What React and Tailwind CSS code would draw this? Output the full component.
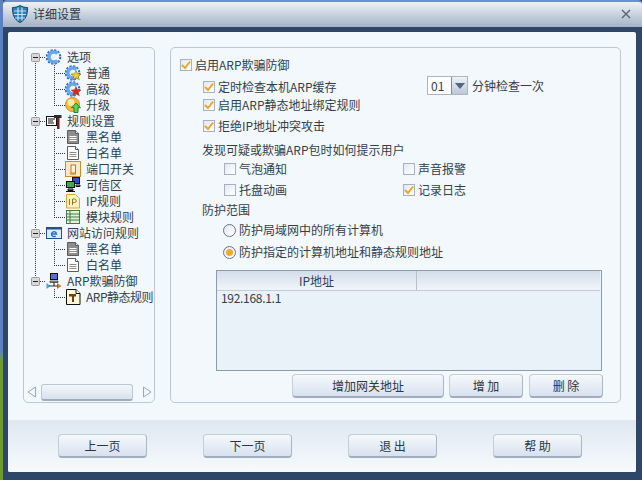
const FONT = "font-['Noto_Sans_CJK_SC','Liberation_Sans',sans-serif]";

// tree icons
const GearIcon = ({ badge }) => (
  <svg width="16" height="16" viewBox="0 0 16 16" className="shrink-0">
    <circle cx="7.500" cy="8" r="6.800" fill="none" stroke="#2c6cc0" strokeWidth="2" strokeDasharray="2.200 1.400" />
    <path d="M11.500 4.500A5 5 0 1 0 11.500 11.500" fill="none" stroke="#6aa6ea" strokeWidth="3.400" />
    <circle cx="7.500" cy="8" r="2" fill="#e8f2fb" />
    {badge && <path d="M11 5.500l1.500 3.300 3.500.3-2.700 2.200 1 3.500-3.300-2-3.200 2 1-3.500-2.700-2.200 3.500-.3z" fill={badge} stroke="#7a5010" strokeWidth=".5" />}
  </svg>
);

const UpgradeIcon = () => (
  <svg width="16" height="16" viewBox="0 0 16 16" className="shrink-0">
    <circle cx="7.500" cy="7.500" r="7" fill="#f4b83e" stroke="#d98a1c" />
    <circle cx="6" cy="5.500" r="3.500" fill="#fde9a8" />
    <path d="M11 6l4.500 4.700H13V15.500H9v-4.800H6.500z" fill="#5fd04f" stroke="#1c7c22" strokeWidth=".9" />
  </svg>
);

const RulesIcon = () => (
  <svg width="16" height="16" viewBox="0 0 16 16" className="shrink-0">
    <rect x="0.500" y="3.500" width="10" height="9" fill="#fff" stroke="#111" />
    <path d="M2 6h7M2 8h5M2 10h6" stroke="#111" />
    <path d="M11 5h2.500v11H11z" fill="#7a1f24" />
    <path d="M8 2h7.500v3H8z" fill="#2b2b2b" />
  </svg>
);

const DocIcon = ({ dark }) => (
  <svg width="16" height="16" viewBox="0 0 16 16" className="shrink-0">
    <path d="M2.500 1.500h8l3 3v10h-11z" fill={dark ? '#8d8d8d' : '#fff'} stroke="#5d5d5d" />
    <path d="M10.500 1.500v3h3" fill={dark ? '#ddd' : '#eee'} stroke="#5d5d5d" />
    <path d="M4.500 7.500h7M4.500 9.500h7M4.500 11.500h7" stroke={dark ? '#fff' : '#8a8a8a'} />
  </svg>
);

const PortIcon = () => (
  <svg width="16" height="16" viewBox="0 0 16 16" className="shrink-0">
    <rect x="0.500" y="0.500" width="15" height="15" fill="#fbe9c6" stroke="#c98a30" />
    <rect x="6" y="4" width="4.500" height="8" fill="#fff3d8" stroke="#c4761a" />
    <path d="M5 13h6" stroke="#c4761a" />
  </svg>
);

const TrustIcon = () => (
  <svg width="16" height="16" viewBox="0 0 16 16" className="shrink-0">
    <rect x="7.500" y="0.500" width="7" height="6" fill="#2c4fbf" stroke="#111" />
    <rect x="1.500" y="4.500" width="8" height="6" fill="#4aa35a" stroke="#111" />
    <path d="M3 12h5v1.500H3zM1 14.500h9M11 8h4v1.500h-4z" stroke="#111" fill="#aaa" />
  </svg>
);

const IpIcon = () => (
  <svg width="16" height="16" viewBox="0 0 16 16" className="shrink-0">
    <path d="M1.500 1.500h9l4 4v9.500h-13z" fill="#fff3c4" stroke="#d7a63a" />
    <path d="M4.500 6v6M7.500 12V6h2a1.500 1.500 0 0 1 0 3.500h-2" fill="none" stroke="#9a7424" />
  </svg>
);

const ModuleIcon = () => (
  <svg width="16" height="16" viewBox="0 0 16 16" className="shrink-0">
    <rect x="1.500" y="1.500" width="13" height="13" fill="#e4f2dc" stroke="#3f7a46" />
    <path d="M1.500 5h13M1.500 8h13M1.500 11h13M5 1.500v13" stroke="#3f7a46" />
  </svg>
);

const SiteIcon = () => (
  <svg width="16" height="16" viewBox="0 0 16 16" className="shrink-0">
    <rect x="0.500" y="2.500" width="15" height="11" fill="#dcecfb" stroke="#274f8f" />
    <path d="M1 3h14v1.500H1z" fill="#274f8f" />
    <path d="M5.500 9h5a2.500 2.500 0 1 0-.8 2" fill="none" stroke="#2b6fc0" strokeWidth="1.300" />
  </svg>
);

const ArpIcon = () => (
  <svg width="16" height="16" viewBox="0 0 16 16" className="shrink-0">
    <rect x="4.500" y="0.500" width="7" height="6" fill="#5a6fd0" stroke="#111" />
    <path d="M4 8h8v1.500H4z" fill="#aaa" stroke="#111" strokeWidth=".6" />
    <path d="M8 9.500V13" stroke="#111" />
    <path d="M0.500 10l4 3-4 3z" fill="#38a8e0" />
    <path d="M11 10l4.500 3-4.500 3z" fill="#d97a1f" />
    <path d="M3 13h9" stroke="#333" />
  </svg>
);

const ArpDocIcon = () => (
  <svg width="16" height="16" viewBox="0 0 16 16" className="shrink-0">
    <path d="M1.500 0.500h9.500l4 4v11h-13.500z" fill="#fff6d6" stroke="#111" />
    <path d="M11 .5v4h4" fill="#fff" stroke="#111" />
    <path d="M4 5h7v2.500H9V13H7V7.500H4z" fill="#6d3f1c" />
  </svg>
);

const Guide = ({ child, last, first, continues = true }) => {
  // dotted tree lines, 1px dots on a 2px pitch
  const dots = { stroke: '#333', strokeWidth: 1, strokeDasharray: '1 1' };
  if (child) {
    return (
      <svg width="35" height="16" className="shrink-0">
        {continues && <path d="M5.500 0v16" {...dots} />}
        <path d={last ? 'M24.500 0v8' : 'M24.500 0v16'} {...dots} />
        <path d="M24 8.500h11" {...dots} />
      </svg>
    );
  }
  return (
    <svg width="16" height="16" className="shrink-0">
      {continues && <path d={first ? 'M5.500 8v8' : 'M5.500 0v16'} {...dots} />}
      {!continues && <path d="M5.500 0v8" {...dots} />}
      <path d="M10 8.500h6" {...dots} />
      <rect x="1.500" y="4.500" width="8" height="8" rx="1" fill="#d8d8d8" stroke="#9a9a9a" />
      <path d="M3 8.500h5" stroke="#222" />
    </svg>
  );
};

const TreeRoot = ({ icon, label, first, continues }) => (
  <div className="flex items-center h-4">
    <Guide first={first} continues={continues} />
    {icon}
    <span className="ml-[5px] whitespace-nowrap">{label}</span>
  </div>
);

const TreeChild = ({ icon, label, last, continues, tight }) => (
  <div className="flex items-center h-4">
    <Guide child last={last} continues={continues} />
    {icon}
    <span className={`ml-[5px] whitespace-nowrap ${tight ? 'tracking-[-0.5px]' : ''}`}>{label}</span>
  </div>
);

const Checkbox = ({ checked }) => (
  <span className="w-3 h-3 shrink-0 border border-[#a3b1c2] bg-gradient-to-br from-[#e3e9f0] to-[#ffffff] flex items-center justify-center">
    {checked && (
      <svg width="10" height="10" viewBox="0 0 10 10">
        <path d="M1 5l3 3 5-6.500" fill="none" stroke="#eda62a" strokeWidth="2" />
      </svg>
    )}
  </span>
);

const CheckRow = ({ checked, label, className }) => (
  <div className={`flex items-center h-4 gap-[3px] whitespace-nowrap ${className || ''}`}>
    <Checkbox checked={checked} />
    <span>{label}</span>
  </div>
);

const Radio = ({ checked, label, className }) => (
  <div className={`flex items-center h-4 gap-[3px] whitespace-nowrap ${className || ''}`}>
    <span className="w-[13px] h-[13px] shrink-0 rounded-full border border-[#67748a] bg-gradient-to-br from-[#e4e9f0] to-[#ffffff] flex items-center justify-center">
      {checked && <span className="w-[7px] h-[7px] rounded-full bg-[#f3a929]" />}
    </span>
    <span>{label}</span>
  </div>
);

const Btn = ({ label, className }) => (
  <button className={`h-[24px] rounded-[4px] border border-[#c4ced9] border-b-2 border-b-[#9fadbf] border-r-[#a9b6c6] bg-gradient-to-b from-[#f6f9fc] to-[#d7e1ef] text-[#2b3644] text-xs ${className || ''}`}>
    {label}
  </button>
);

export default function App() {
  return (
    <div className={`${FONT} w-[642px] h-[480px] overflow-hidden flex text-xs text-[#333e4b] bg-[#2e4668]`}>
      {/* wallpaper showing at the left edge */}
      <div className="w-[3px] shrink-0 bg-gradient-to-b from-[#5c80c4] from-[73%] to-[#6f9a2e] to-[75%]" />

      <div className="flex-1 flex flex-col min-w-0">
        {/* title bar */}
        <div className="h-[27px] shrink-0 flex items-center rounded-t-[4px] border-t-2 border-[#6b8fd6] bg-gradient-to-b from-[#eef2f5] to-[#a3b2c6] pl-[9px] pr-[11px] pb-[2px]">
          <svg width="16" height="18" viewBox="0 0 16 18">
            <path d="M8 .500c2.500 1.500 5 2 7.500 2 0 7-1.500 12-7.500 15-6-3-7.500-8-7.500-15 2.500 0 5-.5 7.500-2z" fill="#2f7fb8" stroke="#1f3f6a" />
            <path d="M2 6h12M2 9.500h12M3 13h10M6 2.500v13M10 2.500v13" stroke="#bfe3f5" strokeWidth="1.200" />
          </svg>
          <span className="ml-[5px] text-[#2c3a4e]">详细设置</span>
          <svg width="10" height="10" viewBox="0 0 10 10" className="ml-auto">
            <path d="M1 1l8 8M9 1l-8 8" stroke="#55657a" strokeWidth="1.400" />
          </svg>
        </div>

        {/* dark frame around the body */}
        <div className="flex-1 min-h-0 pt-[5px] pl-[5px] pr-[6px] pb-2 bg-[#2e4668]">
          <div className="h-full flex flex-col rounded-[2px] bg-[#f2f8fb]">
            <div className="flex gap-[15px] pl-[15px] pt-[15px] h-[388px] shrink-0">
              {/* left tree panel */}
              <div className="w-[132px] h-[356px] shrink-0 flex flex-col rounded-[5px] border border-[#bcc8d4] pl-[6px]">
                <div className="mt-[1px] flex-1 whitespace-nowrap">
                  <TreeRoot first icon={<GearIcon />} label="选项" />
                  <TreeChild icon={<GearIcon badge="#f2d22e" />} label="普通" />
                  <TreeChild icon={<GearIcon badge="#e0242a" />} label="高级" />
                  <TreeChild last icon={<UpgradeIcon />} label="升级" />
                  <TreeRoot icon={<RulesIcon />} label="规则设置" />
                  <TreeChild icon={<DocIcon dark />} label="黑名单" />
                  <TreeChild icon={<DocIcon />} label="白名单" />
                  <TreeChild icon={<PortIcon />} label="端口开关" />
                  <TreeChild icon={<TrustIcon />} label="可信区" />
                  <TreeChild icon={<IpIcon />} label="IP规则" />
                  <TreeChild last icon={<ModuleIcon />} label="模块规则" />
                  <TreeRoot icon={<SiteIcon />} label="网站访问规则" />
                  <TreeChild icon={<DocIcon dark />} label="黑名单" />
                  <TreeChild last icon={<DocIcon />} label="白名单" />
                  <TreeRoot continues={false} icon={<ArpIcon />} label="ARP欺骗防御" />
                  <TreeChild tight last continues={false} icon={<ArpDocIcon />} label="ARP静态规则" />
                </div>
                {/* horizontal scrollbar */}
                <div className="h-[18px] mb-[1px] flex items-center -ml-[3px] pl-[0px]">
                  <svg width="10" height="12" viewBox="0 0 10 12" className="shrink-0">
                    <path d="M8.500 1v10L1 6z" fill="#f2f8fb" stroke="#9aa6b4" />
                  </svg>
                  <div className="ml-[4px] w-[92px] h-[17px] rounded-[3px] border border-[#bcc7d3] border-b-2 border-b-[#a0adbd] bg-gradient-to-b from-[#f3f7fb] to-[#d7e1ed]" />
                  <svg width="10" height="12" viewBox="0 0 10 12" className="ml-[9px] shrink-0">
                    <path d="M1.500 1v10L9 6z" fill="#f2f8fb" stroke="#9aa6b4" />
                  </svg>
                </div>
              </div>

              {/* right settings panel */}
              <div className="w-[451px] h-[356px] shrink-0 rounded-[5px] border border-[#bcc8d4] pl-[9px] pt-[9px]">
                <CheckRow checked label="启用ARP欺骗防御" />
                <div className="mt-[6px] pl-[23px] flex flex-col">
                  <div className="flex items-center h-4">
                    <CheckRow checked label="定时检查本机ARP缓存" className="w-[224px] shrink-0" />
                    <div className="-mt-[3px] flex items-center whitespace-nowrap">
                      <div className="w-[41px] h-[19px] flex border border-[#aab4c2] bg-white">
                        <span className="flex-1 pl-[3px] leading-[17px]">01</span>
                        <span className="w-4 bg-gradient-to-b from-[#eef2f7] to-[#bcc8d8] border-l border-[#7d8ba0] flex items-center justify-center">
                          <svg width="10" height="6" viewBox="0 0 10 6"><path d="M0 0h10L5 6z" fill="#55657c" /></svg>
                        </span>
                      </div>
                      <span className="ml-[4px]">分钟检查一次</span>
                    </div>
                  </div>
                  <CheckRow checked label="启用ARP静态地址绑定规则" className="mt-[2px]" />
                  <CheckRow checked label="拒绝IP地址冲突攻击" className="mt-[5px]" />
                  <div className="mt-[8px] h-4 leading-4 -ml-px">发现可疑或欺骗ARP包时如何提示用户</div>
                  <div className="mt-[3px] pl-[21px] grid grid-cols-[179px_1fr] gap-y-[5px]">
                    <CheckRow label="气泡通知" />
                    <CheckRow label="声音报警" />
                    <CheckRow label="托盘动画" />
                    <CheckRow checked label="记录日志" />
                  </div>
                  <div className="mt-[4px] h-4 leading-4 -ml-px">防护范围</div>
                  <div className="pl-[20px] mt-[4px]">
                    <Radio label="防护局域网中的所有计算机" />
                    <Radio checked label="防护指定的计算机地址和静态规则地址" className="mt-[6px]" />
                  </div>
                  {/* ip table */}
                  <div className="mt-[10px] ml-[13px] w-[386px] h-[101px] border border-[#8a9bab] bg-[#e9f1f9] flex flex-col">
                    <div className="flex h-5 shrink-0 mr-px border-b border-[#c2cdd9] bg-gradient-to-b from-[#d3deea] to-[#f0f5fa]">
                      <div className="w-[200px] text-center leading-5 border-r border-[#b5c1ce]">IP地址</div>
                      <div className="flex-1" />
                    </div>
                    <div className="pl-[4px] -mt-[1px] leading-4 tracking-[-0.3px]">192.168.1.1</div>
                  </div>
                  <div className="mt-[3px] ml-[89px] flex">
                    <Btn label="增加网关地址" className="w-[152px]" />
                    <Btn label="增 加" className="ml-[5px] w-[74px]" />
                    <Btn label="删 除" className="ml-[6px] w-[74px]" />
                  </div>
                </div>
              </div>
            </div>

            {/* bottom button strip */}
            <div className="flex-1 border-t-2 border-[#e2e8ee] bg-gradient-to-b from-[#dfe8f2] to-[#f6fafc] pl-[50px] pt-[12px] flex gap-[56px] items-start rounded-b-[2px]">
              <Btn label="上一页" className="w-[89px]" />
              <Btn label="下一页" className="w-[89px]" />
              <Btn label="退 出" className="w-[89px]" />
              <Btn label="帮 助" className="w-[89px]" />
            </div>
          </div>
        </div>
      </div>
    </div>
  );
}
